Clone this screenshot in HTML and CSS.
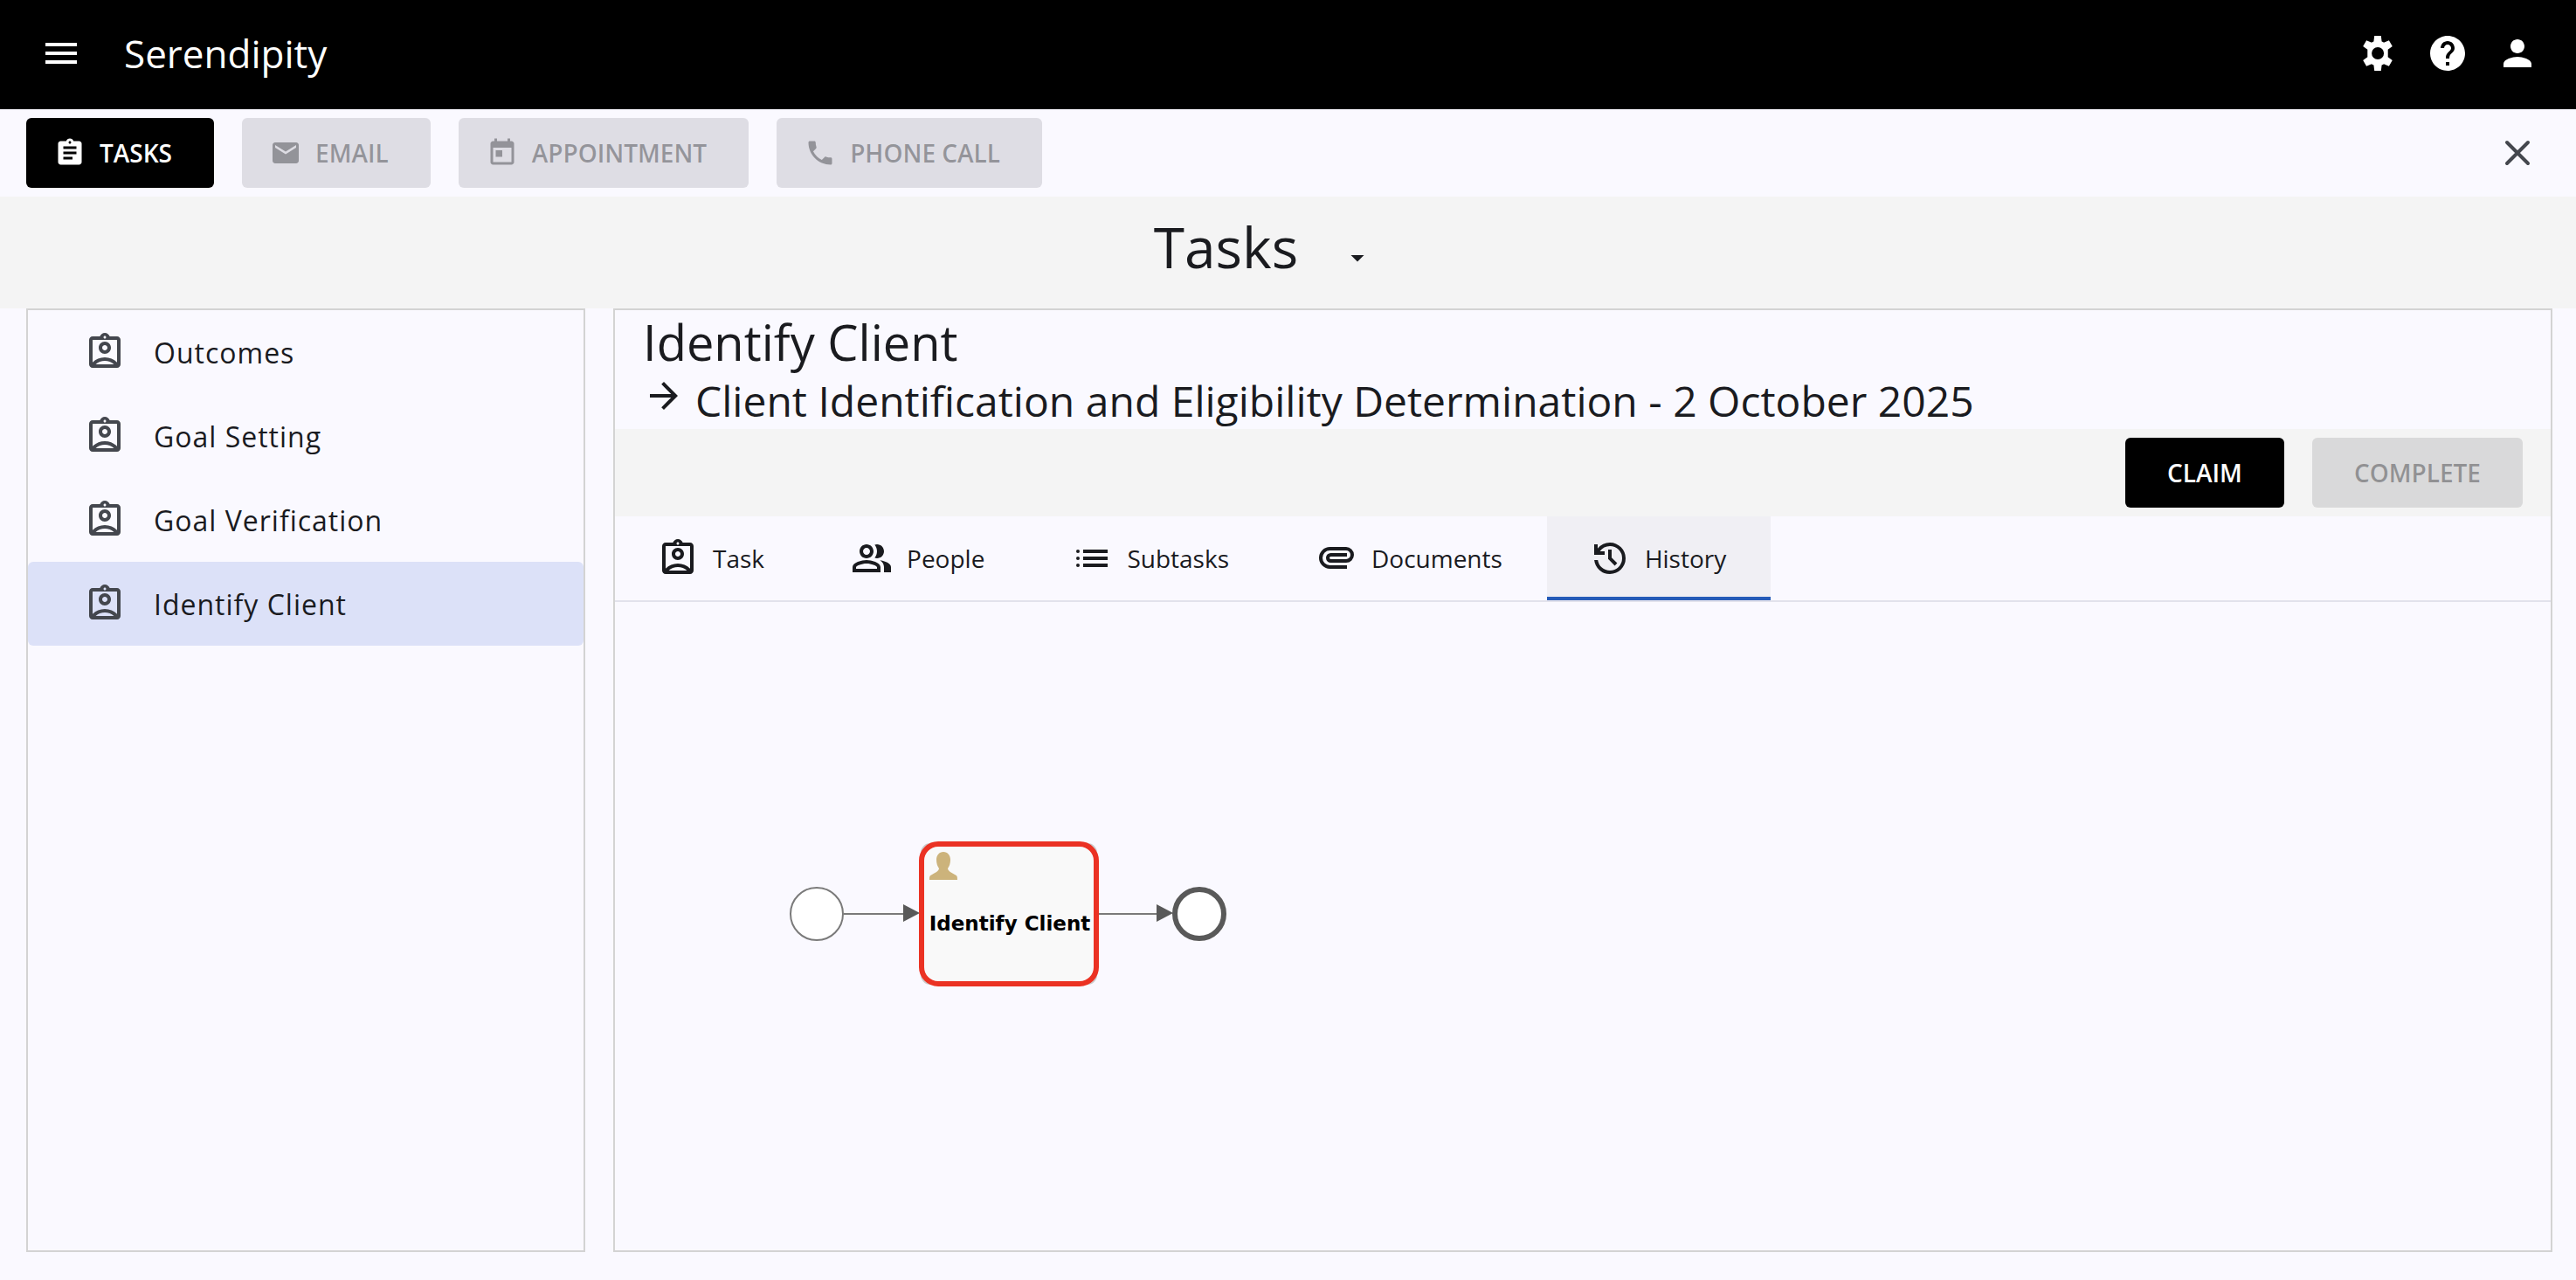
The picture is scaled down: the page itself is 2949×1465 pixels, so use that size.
FILE: index.html
```html
<!DOCTYPE html>
<html lang="en">
<head>
<meta charset="utf-8">
<meta name="viewport" content="width=device-width, initial-scale=1">
<title>Serendipity</title>
<link rel="stylesheet" href="styles.css">
</head>
<body>
<svg class="sprite" aria-hidden="true">
  <symbol id="badge" viewBox="0 0 24 24"><path d="M19 3h-4.180C14.400 1.840 13.300 1 12 1s-2.400.84-2.820 2H5c-1.100 0-2 .9-2 2v14c0 1.100.9 2 2 2h14c1.100 0 2-.9 2-2V5c0-1.100-.9-2-2-2zm-7-.25c.41 0 .75.34.75.75s-.34.75-.75.75-.75-.34-.75-.75.34-.75.75-.75zM19 5v12.850C17.200 16.090 14.760 15 12 15s-5.200 1.090-7 2.850V5h14zM6.780 19C8.180 17.750 10 17 12 17s3.820.75 5.220 2H6.780zM12 13c1.930 0 3.500-1.570 3.500-3.500S13.930 6 12 6 8.500 7.570 8.500 9.500 10.070 13 12 13zm0-5c.83 0 1.500.67 1.500 1.500S12.830 11 12 11s-1.500-.67-1.500-1.500S11.170 8 12 8z"/></symbol>
</svg>

<header class="app-bar">
  <button class="icon-button" type="button" aria-label="Menu"><svg class="icon" viewBox="0 0 24 24"><path d="M3 18h18v-2H3v2zm0-5h18v-2H3v2zm0-7v2h18V6H3z"/></svg></button>
  <span class="app-name">Serendipity</span>
  <button class="icon-button" type="button" aria-label="Settings"><svg class="icon" viewBox="0 0 24 24"><path d="M13.900 22h-3.800l-.4-3.200q-.32-.13-.61-.3-.29-.18-.56-.38L5.550 19.370l-1.950-3.350 2.580-1.950q-.03-.17-.03-.34v-3.450q0-.17.03-.35L3.600 7.980l1.950-3.350 2.980 1.250q.27-.2.57-.38t.6-.3L10.100 2h3.800l.4 3.200q.32.12.61.3t.56.38l2.980-1.250 1.950 3.350-2.580 1.950q.03.180.03.350v3.450q0 .17-.05.34l2.580 1.950-1.950 3.350-2.960-1.250q-.27.2-.57.38t-.6.3L13.900 22zM12.050 15.500a3.500 3.500 0 1 0 0-7 3.500 3.500 0 0 0 0 7z"/></svg></button>
  <button class="icon-button" type="button" aria-label="Help"><svg class="icon" viewBox="0 0 24 24"><path d="M12 2C6.480 2 2 6.480 2 12s4.480 10 10 10 10-4.480 10-10S17.520 2 12 2zm1 17h-2v-2h2v2zm2.070-7.750l-.9.920C13.450 12.900 13 13.500 13 15h-2v-.5c0-1.100.45-2.100 1.170-2.830l1.240-1.260c.37-.36.59-.86.59-1.410 0-1.100-.9-2-2-2s-2 .9-2 2H8c0-2.210 1.790-4 4-4s4 1.790 4 4c0 .88-.36 1.680-.93 2.250z"/></svg></button>
  <button class="icon-button" type="button" aria-label="Account"><svg class="icon" viewBox="0 0 24 24"><path d="M12 12c2.210 0 4-1.790 4-4s-1.790-4-4-4-4 1.790-4 4 1.790 4 4 4zm0 2c-2.670 0-8 1.340-8 4v2h16v-2c0-2.660-5.330-4-8-4z"/></svg></button>
</header>

<div class="command-bar">
  <button class="button button-icon" type="button"><svg class="icon-small" viewBox="0 0 24 24"><path d="M19 3h-4.180C14.400 1.840 13.300 1 12 1s-2.400.84-2.820 2H5c-1.100 0-2 .9-2 2v14c0 1.100.9 2 2 2h14c1.100 0 2-.9 2-2V5c0-1.100-.9-2-2-2zm-7 0c.55 0 1 .45 1 1s-.45 1-1 1-1-.45-1-1 .45-1 1-1zm2 14H7v-2h7v2zm3-4H7v-2h10v2zm0-4H7V7h10v2z"/></svg>TASKS</button>
  <button class="button button-icon" type="button" disabled><svg class="icon-small" viewBox="0 0 24 24"><path d="M20 4H4c-1.100 0-1.990.9-1.990 2L2 18c0 1.100.9 2 2 2h16c1.100 0 2-.9 2-2V6c0-1.100-.9-2-2-2zm0 4l-8 5-8-5V6l8 5 8-5v2z"/></svg>EMAIL</button>
  <button class="button button-icon" type="button" disabled><svg class="icon-small" viewBox="0 0 24 24"><path d="M19 3h-1V1h-2v2H8V1H6v2H5c-1.110 0-1.990.9-1.990 2L3 19c0 1.100.89 2 2 2h14c1.100 0 2-.9 2-2V5c0-1.100-.9-2-2-2zm0 16H5V8h14v11zM7 10h5v5H7z"/></svg>APPOINTMENT</button>
  <button class="button button-icon" type="button" disabled><svg class="icon-small" viewBox="0 0 24 24"><path d="M6.620 10.790c1.440 2.830 3.760 5.140 6.590 6.590l2.200-2.200c.27-.27.67-.36 1.020-.24 1.120.37 2.330.57 3.570.57.55 0 1 .45 1 1V20c0 .55-.45 1-1 1-9.390 0-17-7.610-17-17 0-.55.45-1 1-1h3.500c.55 0 1 .45 1 1 0 1.250.2 2.450.57 3.570.11.35.03.74-.25 1.020l-2.200 2.200z"/></svg>PHONE CALL</button>
  <button class="icon-button close-button" type="button" aria-label="Close"><svg class="icon" viewBox="0 0 24 24"><path d="M6 6l12 12M18 6L6 18" stroke="currentColor" stroke-width="2" stroke-linecap="round"/></svg></button>
</div>

<div class="title-bar">
  <h1 class="page-title">Tasks</h1>
  <button class="title-menu" type="button" aria-label="Choose list"><svg class="icon-small" viewBox="0 0 24 24"><path d="M7 10l5 5 5-5z"/></svg></button>
</div>

<main class="workspace">
  <nav class="panel task-list" aria-label="Tasks">
    <a class="task-link" href="#outcomes"><svg class="icon"><use href="#badge"/></svg>Outcomes</a>
    <a class="task-link" href="#goal-setting"><svg class="icon"><use href="#badge"/></svg>Goal Setting</a>
    <a class="task-link" href="#goal-verification"><svg class="icon"><use href="#badge"/></svg>Goal Verification</a>
    <a class="task-link task-link-active" href="#identify-client" aria-current="page"><svg class="icon"><use href="#badge"/></svg>Identify Client</a>
  </nav>

  <section class="panel task-detail">
    <div class="task-heading">
      <h2 class="task-title">Identify Client</h2>
      <h3 class="case-title"><svg class="icon" viewBox="0 0 24 24"><path d="M12 4l-1.410 1.410L16.170 11H4v2h12.170l-5.580 5.590L12 20l8-8z"/></svg>Client Identification and Eligibility Determination - 2 October 2025</h3>
    </div>
    <div class="task-actions">
      <button class="button" type="button">CLAIM</button>
      <button class="button" type="button" disabled>COMPLETE</button>
    </div>
    <div class="tabs" role="tablist">
      <button class="tab" type="button" role="tab"><svg class="icon"><use href="#badge"/></svg>Task</button>
      <button class="tab" type="button" role="tab"><svg class="icon" viewBox="0 0 24 24"><path d="M16.670 13.130C18.040 14.060 19 15.320 19 17v3h4v-3c0-2.180-3.570-3.470-6.330-3.870zM15 12c2.210 0 4-1.790 4-4s-1.790-4-4-4c-.47 0-.91.1-1.330.24C14.500 5.270 15 6.580 15 8s-.5 2.730-1.330 3.760c.42.14.86.24 1.330.24zM9 12c2.210 0 4-1.790 4-4s-1.790-4-4-4-4 1.790-4 4 1.790 4 4 4zm0-6c1.100 0 2 .9 2 2s-.9 2-2 2-2-.9-2-2 .9-2 2-2zM9 13c-2.670 0-8 1.340-8 4v3h16v-3c0-2.660-5.330-4-8-4zm6 5H3v-.99C3.200 16.290 6.300 15 9 15s5.800 1.290 6 2v1z"/></svg>People</button>
      <button class="tab" type="button" role="tab"><svg class="icon" viewBox="0 0 24 24"><circle cx="4" cy="8" r="1"/><circle cx="4" cy="12" r="1"/><circle cx="4" cy="16" r="1"/><path d="M7 7h14v2H7zM7 11h14v2H7zM7 15h14v2H7z"/></svg>Subtasks</button>
      <button class="tab" type="button" role="tab"><svg class="icon" viewBox="0 -960 960 960"><path d="M330-240q-104 0-177-73T80-490q0-104 73-177t177-73h370q75 0 127.500 52.500T880-560q0 75-52.500 127.500T700-380H350q-46 0-78-32t-32-78q0-46 32-78t78-32h370v80H350q-13 0-21.500 8.500T320-490q0 13 8.500 21.500T350-460h350q42-1 71-29.500t29-70.500q0-42-29-71t-71-29H330q-71-1-120.500 49T160-490q0 70 49.500 119T330-320h390v80H330Z"/></svg>Documents</button>
      <button class="tab tab-active" type="button" role="tab" aria-selected="true"><svg class="icon" viewBox="0 -960 960 960"><path d="M480-120q-138 0-240.500-91.500T122-440h82q14 104 92.500 172T480-200q117 0 198.500-81.500T760-480q0-117-81.500-198.500T480-760q-69 0-129 32t-101 88h110v80H120v-240h80v94q51-64 124.500-99T480-840q75 0 140.500 28.500t114 77q48.500 48.500 77 114T840-480q0 75-28.500 140.500t-77 114q-48.500 48.500-114 77T480-120Zm112-192L440-464v-216h80v184l128 128-56 56Z"/></svg>History</button>
    </div>
    <div class="diagram" role="tabpanel">
      <svg class="process" viewBox="0 0 512 176" role="img" aria-label="Process diagram">
        <g stroke="#7a7a7a" stroke-width="2">
          <circle cx="35" cy="88" r="30" fill="#fff"/>
          <path d="M66 88H136M356 88H426"/>
        </g>
        <path fill="#595959" d="M134 77l19 10-19 10zM424 77l19 10-19 10z"/>
        <rect x="155" y="8" width="200" height="160" rx="10" fill="#f9f9f9" stroke="#ccc" stroke-width="2"/>
        <rect x="155" y="8" width="200" height="160" rx="19" fill="#f9f9f9" stroke="#eb3223" stroke-width="6"/>
        <path fill="#ccb37b" d="M180 17c5 0 8 4 8 9 0 4-1 7-3 10 0 3 5 5 8 7 3 1 3 3 3 6h-32c0-3 0-5 3-6 3-2 8-4 8-7-2-3-3-6-3-10 0-5 3-9 8-9z"/>
        <text class="process-label" x="256" y="107">Identify Client</text>
        <circle cx="473" cy="88" r="28" fill="#fff" stroke="#595959" stroke-width="6"/>
      </svg>
    </div>
  </section>
</main>
</body>
</html>
```
FILE: styles.css
```css
* {
  box-sizing: border-box;
}

body {
  margin: 0;
  min-height: 100vh;
  display: flex;
  flex-direction: column;
  background: #faf9ff;
  color: #1a1b1f;
  font-family: "Open Sans", "Noto Sans", sans-serif;
  font-size: 28px;
}

button {
  border: 0;
  margin: 0;
  background: none;
  color: inherit;
  font: inherit;
  cursor: pointer;
}

.sprite {
  position: absolute;
  width: 0;
  height: 0;
}

.icon {
  flex: none;
  width: 48px;
  height: 48px;
  fill: currentColor;
}

.icon-small {
  flex: none;
  width: 36px;
  height: 36px;
  fill: currentColor;
}

.icon-button {
  display: flex;
  align-items: center;
  justify-content: center;
  width: 80px;
  height: 80px;
  padding: 0;
}

.app-bar {
  display: flex;
  align-items: center;
  padding: 21px 27px 24px 30px;
  background: #000;
  color: #fff;
}

.app-name {
  flex: 1;
  padding-left: 32px;
  font-size: 44px;
  line-height: 56px;
}

.command-bar {
  display: flex;
  align-items: center;
  gap: 32px;
  padding: 10px 27px 10px 30px;
}

.close-button {
  margin-left: auto;
  color: #44474e;
}

.button {
  display: flex;
  align-items: center;
  gap: 16px;
  height: 80px;
  padding: 0 48px;
  border-radius: 6px;
  background: #000;
  color: #fff;
  font-weight: 600;
}

.button-icon {
  padding-left: 32px;
}

.button:disabled {
  background: rgba(26, 27, 31, 0.12);
  color: rgba(26, 27, 31, 0.38);
  cursor: default;
}

.title-bar {
  display: flex;
  align-items: center;
  justify-content: center;
  height: 128px;
  background: #f4f4f4;
}

.page-title {
  margin: 0 0 12px;
  font-size: 64px;
  font-weight: 400;
  line-height: 80px;
}

.title-menu {
  display: flex;
  padding: 12px 56px 0 50px;
}

.workspace {
  flex: 1;
  display: flex;
  gap: 32px;
  padding: 0 27px 32px 30px;
}

.panel {
  border: 2px solid #d3d3d3;
}

.task-list {
  flex: 0 0 640px;
}

.task-link {
  display: flex;
  align-items: center;
  gap: 32px;
  height: 96px;
  padding: 0 64px;
  border-radius: 6px;
  color: #1a1b1f;
  font-size: 32px;
  letter-spacing: 1px;
  text-decoration: none;
}

.task-link .icon {
  color: #44474e;
}

.task-link-active {
  background: #dce1f8;
}

.task-detail {
  flex: 1;
  min-width: 0;
}

.task-heading {
  padding: 0 32px;
}

.task-title {
  margin: 0;
  font-size: 56px;
  font-weight: 400;
  line-height: 72px;
}

.case-title {
  display: flex;
  align-items: flex-start;
  gap: 12px;
  margin: 0;
  font-size: 48px;
  font-weight: 400;
  line-height: 64px;
}

.case-title .icon {
  margin-top: 2px;
}

.task-actions {
  display: flex;
  justify-content: flex-end;
  gap: 32px;
  padding: 10px 32px;
  background: #f4f4f4;
}

.tabs {
  display: flex;
  border-bottom: 2px solid #e2e2ec;
}

.tab {
  display: flex;
  align-items: center;
  gap: 16px;
  height: 96px;
  padding: 0 51px 0 48px;
}

.tab-active {
  background: #f0eff4;
  box-shadow: inset 0 -4px #255bb8;
}

.diagram {
  padding: 269px 196px;
}

.process {
  display: block;
  width: 512px;
  height: 176px;
}

.process-label {
  font-family: "DejaVu Sans", sans-serif;
  font-size: 23px;
  font-weight: 700;
  text-anchor: middle;
}
```
